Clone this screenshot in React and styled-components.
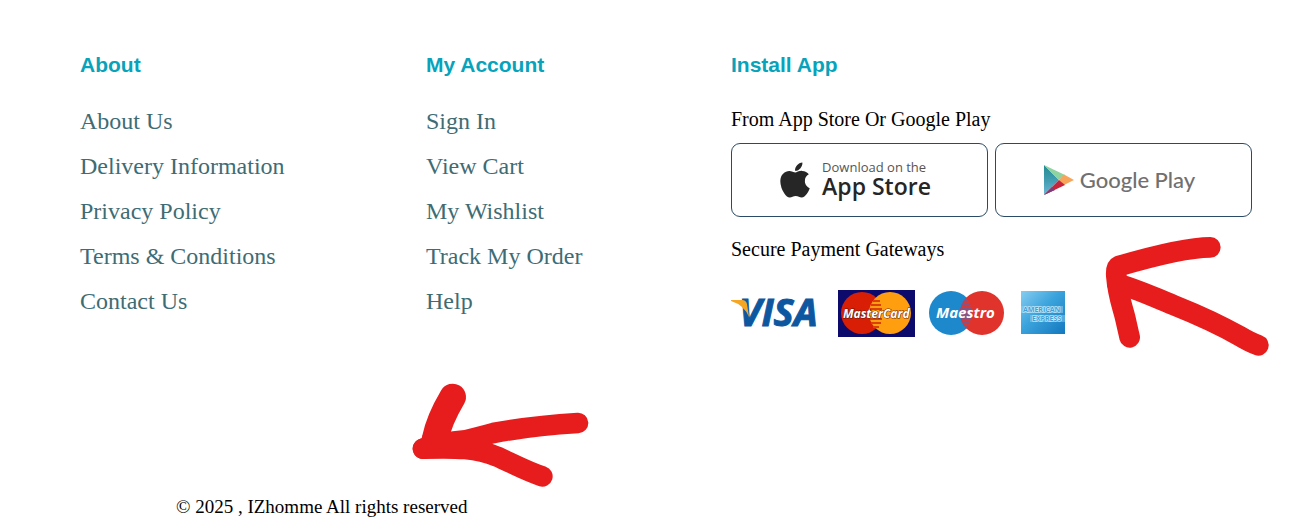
import React from "react";
import styled, { createGlobalStyle } from "styled-components";
import { FaApple } from "react-icons/fa";

const GlobalStyle = createGlobalStyle`
  * { box-sizing: border-box; }
  body { margin: 0; background: #fff; }
`;

const serif = `"Liberation Serif", "Times New Roman", serif`;
const humanist = `"Open Sans", "Noto Sans", sans-serif`;

const Footer = styled.footer`
  padding: 53px 60px 12px 80px;
  font-family: ${serif};
  color: #000;
`;

const Columns = styled.div`
  display: grid;
  grid-template-columns: 346fr 305fr 521fr;
`;

const Column = styled.section`
  position: relative;
  min-width: 0;
`;

const Heading = styled.h2`
  margin: 0 0 30px;
  font: bold 21px/24px "Liberation Sans", Arial, sans-serif;
  color: #08a3bb;
`;

const LinkList = styled.ul`
  display: flex;
  flex-direction: column;
  gap: 17px;
  margin: 0;
  padding: 0;
  list-style: none;
`;

const LinkItem = styled.li`
  font-size: 24px;
  line-height: 28px;
`;

const TextLink = styled.a`
  color: #3e6c74;
  text-decoration: none;
`;

const Label = styled.p`
  margin: 0;
  font-size: 20px;
  line-height: 24px;
`;

const Badges = styled.div`
  display: grid;
  grid-template-columns: 1fr 1fr;
  gap: 7px;
  margin: 12px 0 20px;
`;

const Badge = styled.a`
  display: flex;
  align-items: center;
  justify-content: center;
  gap: ${(p) => p.$gap}px;
  height: 74px;
  padding-right: 8px;
  border: 1px solid #2b4a66;
  border-radius: 9px;
  color: #262626;
  text-decoration: none;
  white-space: nowrap;
`;

const AppleIcon = styled(FaApple)`
  width: 30px;
  height: 40px;
`;

const BadgeText = styled.span`
  display: flex;
  flex-direction: column;
  padding-bottom: 4px;
  font-family: ${humanist};
`;

const BadgeSmall = styled.span`
  font-size: 13px;
  line-height: 16px;
  color: #555;
`;

const BadgeLarge = styled.span`
  font-size: 23px;
  font-weight: 600;
  line-height: 22px;
`;

const PlayText = styled.span`
  font: 500 22px/28px Lato, sans-serif;
  color: #707070;
`;

const Payments = styled.div`
  display: flex;
  gap: 13px;
  margin-top: 29px;
`;

const Bottom = styled.div`
  position: relative;
  padding: 158px 0 0 96px;
`;

const Copyright = styled.p`
  margin: 0;
  font-size: 19px;
  line-height: 24px;
`;

const Arrow = styled.svg`
  position: absolute;
  pointer-events: none;
  fill: none;
  stroke: #e71d1d;
  stroke-width: 62;
  stroke-linecap: round;
  stroke-linejoin: round;
`;

const StoreArrow = styled(Arrow)`
  top: 167px;
  right: -48px;
`;

const CopyrightArrow = styled(Arrow)`
  top: 33px;
  left: 310px;
`;

const ThickStroke = styled.path`
  stroke-width: 80;
`;

const Mark = styled.text`
  font-family: ${humanist};
  font-size: ${(p) => p.$size}px;
  font-weight: 700;
  font-style: ${(p) => (p.$upright ? "normal" : "italic")};
`;

const VisaLogo = styled.svg`
  overflow: visible;
`;

function PlayIcon() {
  return (
    <svg width="30" height="30" viewBox="0 0 30 30" aria-hidden="true">
      <defs>
        <linearGradient id="playTeal" x1="0" y1="0" x2="0" y2="1">
          <stop offset="0" stopColor="#238c90" />
          <stop offset="0.55" stopColor="#459fb4" />
          <stop offset="1" stopColor="#6db8d6" />
        </linearGradient>
      </defs>
      <path d="M0 0L15 15L0 30Z" fill="url(#playTeal)" />
      <path d="M0 0L21 10L15 15Z" fill="#8fd3a0" />
      <path d="M20 9.5L30 15L20 20L15 15Z" fill="#f8a55c" />
      <path d="M15 15L21 20L0 30Z" fill="#c7243c" />
      <path d="M8 22L11 25L0 30Z" fill="#7d3d78" />
    </svg>
  );
}

function Visa() {
  return (
    <VisaLogo width="94" height="47" viewBox="0 0 94 47" role="img" aria-label="Visa">
      <g fill="#0d57a0" stroke="#0d57a0" strokeWidth="1">
        <Mark $size={38} x="8" y="36">VISA</Mark>
      </g>
      <path d="M0 10H11Q15 10 16 14L18 27Q13 15 0 11Z" fill="#f5a623" />
    </VisaLogo>
  );
}

function MasterCard() {
  return (
    <svg width="77" height="47" viewBox="0 0 77 47" role="img" aria-label="MasterCard">
      <rect width="77" height="47" fill="#0c0b6c" />
      <circle cx="24" cy="23" r="21" fill="#d81e05" />
      <circle cx="52" cy="23" r="21" fill="#ff9e0f" />
      <path
        d="M35 11H42M33 15H43M32 19H44M32 29H44M33 33H43M35 37H41"
        stroke="#d9400c"
        strokeWidth="2"
      />
      <g fill="#fff" stroke="#5a1a10" strokeWidth="1" paintOrder="stroke">
        <Mark $size={12} x="5" y="28">MasterCard</Mark>
      </g>
    </svg>
  );
}

function Maestro() {
  return (
    <svg width="80" height="47" viewBox="0 0 80 47" role="img" aria-label="Maestro">
      <circle cx="23" cy="23" r="22" fill="#1e88cc" />
      <circle cx="54" cy="23" r="22" fill="#e0332c" />
      <path d="M38 8A22 22 0 0 1 38 38A22 22 0 0 1 38 8Z" fill="#8b5280" />
      <path
        d="M35 12H42M34 16H43M34 31H43M35 35H42"
        stroke="#d23a3c"
        strokeWidth="2"
      />
      <Mark $size={15} x="8" y="28" fill="#fff">Maestro</Mark>
    </svg>
  );
}

function Amex() {
  return (
    <svg width="45" height="47" viewBox="0 0 45 47" role="img" aria-label="American Express">
      <defs>
        <linearGradient id="amexBlue" x1="0" y1="0" x2="1" y2="1">
          <stop offset="0" stopColor="#86cdf0" />
          <stop offset="0.45" stopColor="#3ba3dc" />
          <stop offset="1" stopColor="#1478be" />
        </linearGradient>
      </defs>
      <rect y="1" width="44" height="43" fill="url(#amexBlue)" />
      <rect y="16" width="42" height="7" fill="#8ccdee" opacity="0.6" />
      <rect x="9" y="25" width="35" height="7" fill="#8ccdee" opacity="0.5" />
      <g fill="#3f9fd6" stroke="#d6effb" strokeWidth="1" paintOrder="stroke">
        <Mark $size={7} $upright x="2" y="22">AMERICAN</Mark>
        <Mark $size={7} $upright x="11" y="31">EXPRESS</Mark>
      </g>
    </svg>
  );
}

function LinkColumn({ title, links }) {
  return (
    <Column>
      <Heading>{title}</Heading>
      <LinkList>
        {links.map((text) => (
          <LinkItem key={text}>
            <TextLink href="#">{text}</TextLink>
          </LinkItem>
        ))}
      </LinkList>
    </Column>
  );
}

const aboutLinks = [
  "About Us",
  "Delivery Information",
  "Privacy Policy",
  "Terms & Conditions",
  "Contact Us",
];
const accountLinks = ["Sign In", "View Cart", "My Wishlist", "Track My Order", "Help"];

export default function App() {
  return (
    <>
      <GlobalStyle />
      <Footer>
        <Columns>
          <LinkColumn title="About" links={aboutLinks} />
          <LinkColumn title="My Account" links={accountLinks} />
          <Column>
            <Heading>Install App</Heading>
            <Label>From App Store Or Google Play</Label>
            <Badges>
              <Badge href="#" $gap={12}>
                <AppleIcon aria-hidden="true" />
                <BadgeText>
                  <BadgeSmall>Download on the</BadgeSmall>
                  <BadgeLarge>App Store</BadgeLarge>
                </BadgeText>
              </Badge>
              <Badge href="#" $gap={6}>
                <PlayIcon />
                <PlayText>Google Play</PlayText>
              </Badge>
            </Badges>
            <Label>Secure Payment Gateways</Label>
            <Payments>
              <Visa />
              <MasterCard />
              <Maestro />
              <Amex />
            </Payments>
            <StoreArrow width="220" height="150" viewBox="0 0 660 450" aria-hidden="true">
              <path d="M391 82C335 82 220 108 117 138C108 142 108 155 109 168C114 230 128 260 136 295C143 325 145 335 149 352" />
              <path d="M112 192C165 204 215 229 280 255C350 283 410 309 480 349C505 364 515 369 535 376" />
            </StoreArrow>
          </Column>
        </Columns>
        <Bottom>
          <Copyright>© 2025 , IZhomme All rights reserved</Copyright>
          <CopyrightArrow width="220" height="130" viewBox="0 0 660 390" aria-hidden="true">
            <ThickStroke d="M188 81C162 125 144 165 136 205L132 222" />
            <path d="M564 159C480 164 380 176 310 189C270 198 255 211 190 215L99 236" />
            <path d="M99 236C200 233 260 234 322 260C370 282 415 306 457 319" />
          </CopyrightArrow>
        </Bottom>
      </Footer>
    </>
  );
}
